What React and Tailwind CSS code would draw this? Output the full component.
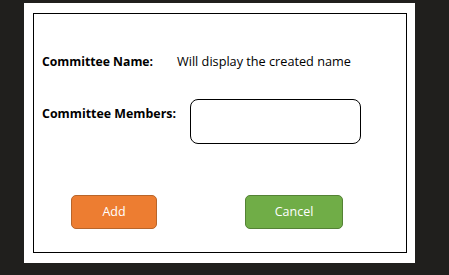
export default function App() {
  return (
    <div className="w-[449px] h-[275px] bg-[#201f1d] pt-[3px] pl-[24px]" style={{ fontFamily: "'Open Sans', sans-serif" }}>
      <div className="w-[391px] h-[260px] bg-white pt-[10px] pl-[9px]">
        <div className="w-[374px] h-[240px] border border-black pl-[8px]">
          <div className="flex items-center mt-[38px] h-[20px]">
            <span className="w-[135px] text-[12.2px] font-bold text-black">Committee Name:</span>
            <span className="text-[12.7px] text-black">Will display the created name</span>
          </div>
          <div className="flex items-start mt-[27px]">
            <span className="w-[148px] mt-[6px] text-[12.4px] font-bold text-black">Committee Members:</span>
            <div className="w-[171px] h-[45px] border border-black rounded-[8px]"></div>
          </div>
          <div className="flex mt-[51px]">
            <button className="ml-[29px] w-[86px] h-[34px] rounded-[5px] bg-[#ed7d31] border border-[#b8652a] text-white text-[12.5px]">
              Add
            </button>
            <button className="ml-[88px] w-[98px] h-[34px] rounded-[5px] bg-[#70ad47] border border-[#548235] text-white text-[12.5px]">
              Cancel
            </button>
          </div>
        </div>
      </div>
    </div>
  );
}
